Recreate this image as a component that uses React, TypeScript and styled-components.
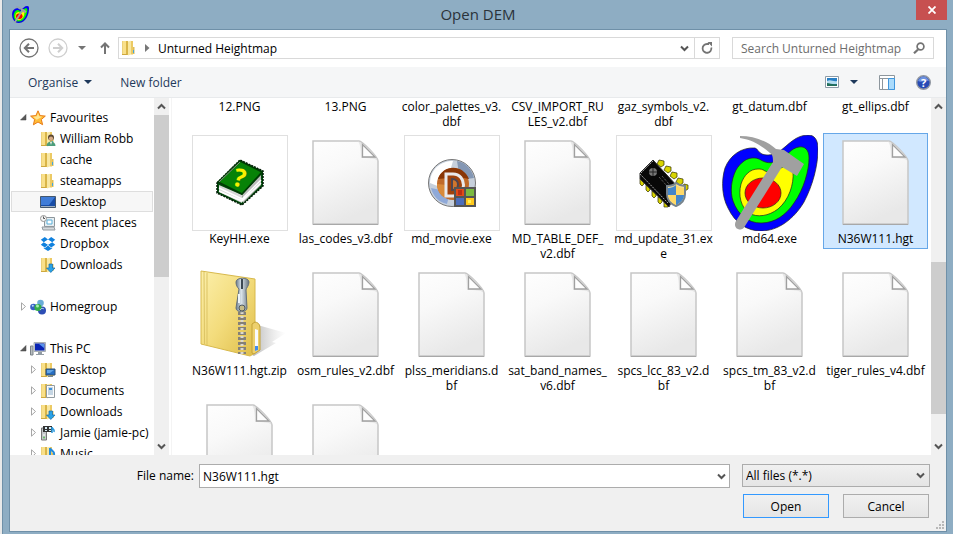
import React, { useId, useLayoutEffect, useRef } from "react";
import styled, { createGlobalStyle, css } from "styled-components";

const Global = createGlobalStyle`
  * { box-sizing: border-box; }
  body { margin: 0; background: #e9e9e9; }
  body, button, input, select {
    font-family: "Open Sans", "Noto Sans", sans-serif;
    font-size: 12px;
    line-height: 15px;
    color: #000;
  }
  button { padding: 0; border: 0; background: none; }
  svg { display: block; flex: none; }
`;

/* ---------- window frame ---------- */

const Frame = styled.div`
  display: flex;
  flex-direction: column;
  height: 100vh;
  margin-left: 2px;
  padding: 0 6px 2px;
  border-left: 1px solid #6f90a8;
  background: #8eadc3;
`;
const TitleBar = styled.header`
  display: grid;
  grid-template-columns: 1fr auto 1fr;
  flex: none;
  height: 29px;
`;
const AppIcon = styled.div`
  padding: 6px 0 0 3px;
`;
const Title = styled.h1`
  margin: 0;
  font-size: 15px;
  font-weight: 400;
  line-height: 29px;
  color: #2b333a;
`;
const CloseButton = styled.button`
  display: grid;
  place-items: center;
  justify-self: end;
  width: 31px;
  height: 20px;
  background: #c75050;
`;
const Dialog = styled.main`
  display: flex;
  flex: 1;
  flex-direction: column;
  min-height: 0;
  border: 1px solid #6f90a8;
  background: #fff;
`;

/* ---------- navigation ---------- */

const NavRow = styled.nav`
  display: flex;
  align-items: center;
  flex: none;
  height: 37px;
  padding: 0 12px 1px 9px;
`;
const IconButton = styled.button<{ $width?: number }>`
  display: grid;
  place-items: center;
  flex: none;
  width: ${(p) => p.$width ?? 20}px;
  height: 20px;
`;
const HistoryButtons = styled.div`
  display: flex;
  align-items: center;
  gap: 9px;
  width: 99px;
`;
const AddressBar = styled.div`
  display: flex;
  align-items: center;
  flex: 1;
  height: 22px;
  border: 1px solid #d9d9d9;
`;
const Crumbs = styled.div`
  display: flex;
  align-items: center;
  flex: 1;
  gap: 8px;
  padding-left: 2px;
`;
const RefreshCell = styled.div`
  display: grid;
  place-items: center;
  width: 25px;
  height: 20px;
  border-left: 1px solid #d9d9d9;
`;
const SearchBox = styled.label`
  display: flex;
  align-items: center;
  width: 202px;
  height: 22px;
  margin-left: 12px;
  padding: 0 8px;
  border: 1px solid #d9d9d9;
`;
const SearchInput = styled.input`
  flex: 1;
  min-width: 0;
  padding: 0;
  border: 0;
  outline: 0;
  background: none;
  &::placeholder { color: #6d6d6d; opacity: 1; }
`;
const Toolbar = styled.div`
  display: flex;
  align-items: center;
  flex: none;
  height: 31px;
  padding: 0 15px 0 18px;
  border-bottom: 1px solid #e8eaec;
  background: #f5f6f7;
`;
const ToolButton = styled.button`
  display: flex;
  align-items: center;
  gap: 6px;
  margin-right: 28px;
  color: #1e395b;
`;
const ViewTools = styled.div`
  display: flex;
  align-items: center;
  margin-left: auto;
`;
const ToolIcon = styled.button<{ $gap: number }>`
  margin-left: ${(p) => p.$gap}px;
`;

/* ---------- body ---------- */

const Body = styled.div`
  display: flex;
  flex: 1;
  min-height: 0;
`;
const Sidebar = styled.aside`
  flex: none;
  width: 144px;
  padding: 9px 1px 0;
  overflow: hidden;
`;
const TreeList = styled.ul`
  margin: 0;
  padding: 0;
  list-style: none;
`;
const Group = styled.li`
  margin-bottom: 21px;
`;
const TreeRow = styled.a<{ $child?: boolean; $active?: boolean }>`
  display: flex;
  align-items: center;
  height: 21px;
  padding-left: ${(p) => (p.$child ? 18 : 8)}px;
  gap: 3px;
  border: 1px solid transparent;
  color: #000;
  text-decoration: none;
  white-space: nowrap;
  ${(p) => p.$active && css`
    border-color: #dedede;
    background: #f7f7f7;
  `}
`;
const Label = styled.span`
  padding-left: 1px;
`;
const ScrollTrack = styled.div`
  display: flex;
  flex: none;
  flex-direction: column;
  width: 15px;
  background: #f0f0f0;
`;
const ScrollArrow = styled.button`
  display: grid;
  place-items: center;
  flex: none;
  height: 17px;
`;
const Spacer = styled.div<{ $grow: number }>`
  flex: ${(p) => p.$grow} 1 0;
`;
const Thumb = styled.div<{ $grow: number }>`
  flex: ${(p) => p.$grow} 1 0;
  background: #cdcdcd;
`;
const FilePane = styled.section`
  flex: 1;
  min-width: 0;
  margin-left: 2px;
  padding-left: 15px;
  overflow: hidden;
  border-left: 1px solid #f4f4f4;
`;
const FileGrid = styled.ul`
  display: grid;
  grid-template-columns: repeat(auto-fill, 105px);
  grid-auto-rows: 132px;
  column-gap: 1px;
  margin: 0;
  padding: 0;
  list-style: none;
`;
const FileItem = styled.li<{ $selected?: boolean }>`
  display: flex;
  flex-direction: column;
  align-items: center;
  align-self: start;
  padding: 1px 0;
  border: 1px solid ${(p) => (p.$selected ? "#66a7e8" : "transparent")};
  background: ${(p) => (p.$selected ? "#d1e8ff" : "none")};
`;
const Preview = styled.div<{ $framed?: boolean }>`
  display: flex;
  align-items: center;
  justify-content: center;
  width: 96px;
  height: 96px;
  box-shadow: ${(p) => (p.$framed ? "inset 0 0 0 1px #e0e0e0" : "none")};
`;
const FileName = styled.span`
  min-height: 16px;
  text-align: center;
  white-space: pre;
`;

/* ---------- footer ---------- */

const Footer = styled.form`
  display: grid;
  grid-template-columns: 177px 1fr 188px;
  grid-template-rows: 24px 24px;
  align-items: start;
  flex: none;
  column-gap: 12px;
  row-gap: 6px;
  height: 76px;
  padding: 9px 16px 0 0;
  background: #f0f0f0;
`;
const NameField = styled.div`
  display: grid;
  grid-column: 1 / 3;
  grid-template-columns: 184px 1fr;
  column-gap: 5px;
`;
const FileLabel = styled.label`
  line-height: 24px;
  text-align: right;
`;
const Combo = styled.div`
  display: flex;
  align-items: center;
  height: 24px;
  border: 1px solid #acacac;
  background: #fff;
`;
const ComboInput = styled.input`
  flex: 1;
  min-width: 0;
  padding: 0 3px;
  border: 0;
  outline: 0;
  background: none;
`;
const SelectBox = styled.div`
  display: grid;
  align-items: center;
  height: 23px;
  border: 1px solid #acacac;
  background: linear-gradient(#f0f0f0, #e5e5e5);
  > * { grid-area: 1 / 1; }
  > svg { justify-self: end; margin-right: 4px; pointer-events: none; }
`;
const Select = styled.select`
  width: 100%;
  height: 21px;
  padding: 0 3px;
  border: 0;
  appearance: none;
  background: none;
`;
const Actions = styled.div`
  display: flex;
  grid-column: 3;
  justify-content: space-between;
  padding: 0 1px;
`;
const PushButton = styled.button<{ $primary?: boolean }>`
  width: 86px;
  height: 24px;
  border: 1px solid ${(p) => (p.$primary ? "#3399ff" : "#acacac")};
  background: linear-gradient(#f0f0f0, #e5e5e5);
`;
const GripHolder = styled.div`
  position: absolute;
  right: 8px;
  bottom: 4px;
`;

/* ---------- small glyphs ---------- */

const Chevron = ({ up = false }: { up?: boolean }) => (
  <svg width="9" height="7" viewBox="0 0 9 7">
    <path d={up ? "M1 5.5 4.5 2 8 5.5" : "M1 1.5 4.5 5 8 1.5"} fill="none" stroke="#555" strokeWidth="2" />
  </svg>
);
const Caret = ({ color }: { color: string }) => (
  <svg width="8" height="4" viewBox="0 0 8 4"><path d="M0 0h8L4 4z" fill={color} /></svg>
);
const HistoryArrow = ({ forward = false }: { forward?: boolean }) => (
  <svg width="20" height="20" viewBox="0 0 20 20" fill="none" stroke={forward ? "#cfcfcf" : "#747474"}>
    <circle cx="10" cy="10" r="9" strokeWidth="1.3" />
    <path d={forward ? "M5 10h9M10 5.8l4.2 4.2-4.2 4.2" : "M15 10H6M10 5.8 5.8 10l4.2 4.2"} strokeWidth="2" />
  </svg>
);
const Expander = ({ open = false }: { open?: boolean }) => (
  <svg width="7" height="9" viewBox="0 0 7 9">
    {open ? <path d="M6 1.5V7H.5z" fill="#595959" stroke="#404040" strokeWidth=".5" />
      : <path d="M1.5.8v7.400l4-3.700z" fill="#fff" stroke="#a6a6a6" />}
  </svg>
);
const Contours = ({ size }: { size: number }) => (
  <svg width={size} height={size} viewBox="0 0 96 96">
    <g stroke="#222" strokeWidth=".7">
      <path d="M33 13C20 12 8 20 3 33-1 46 0 62 6 73c7 15 19 23 33 23 17 0 33-12 43-29C91 50 96 30 96 14 96 4 92 0 86 0 74 0 66 10 58 16c-6 4-13 5-18 3-4-2-4-5-7-6z" fill="#00f" />
      <path d="M33 23c-8-1-15 5-19 12-5 10-6 22-3 31 5 14 15 22 28 22 14 0 25-8 33-20 10-14 15-33 15-45 0-8-4-12-10-11-8 1-12 9-19 13-9 5-16 2-19 0-2-1-4-2-6-2z" fill="#0f0" />
      <path d="M36 34c-8 0-14 6-17 15-3 12 0 23 8 29 8 5 20 3 29-4 11-9 16-25 15-37-1-6-6-8-12-4-7 4-11 5-16 3-3-2-4-2-7-2z" fill="#ff0" />
      <ellipse cx="41" cy="58" rx="18" ry="15" fill="red" />
    </g>
    <path d="M18 1c14 0 27 5 36 13l8 1 20 14-7 12-15-9-37 59c-2 4-5 4-7 3-3-1-4-5-2-8l37-59c0-6-1-8-3-9C40 11 31 5 18 3z" fill="#a0a0a0" />
  </svg>
);

/* ---------- tree icons ---------- */

type Mark = "user" | "screen" | "doc" | "down" | "note";
const Folder = ({ mark }: { mark?: Mark }) => (
  <svg width="16" height="16" viewBox="0 0 16 16">
    <path d="M1 1h5v14H1z" fill="#f9e08a" />
    <path d="M1 1h1v14H1z" fill="#ecd17a" />
    <path d="M5 1h2v14H5z" fill="#d9b548" />
    <path d="M7 1.500 10 .8v13.700l-3 1z" fill="#f8e7a2" />
    <path d="M10 1h2v13.500h-2z" fill="#ecca64" />
    <path d="M12 7h1.500v7H12z" fill="#dfbd55" />
    <path d="M1 14.500h5" stroke="#cfa93f" />
    <path d="M12 10h1v3h-1z" fill="#42a5dc" />
    {mark === "user" && <g><circle cx="11" cy="6.500" r="3" fill="#5c4934" /><circle cx="11" cy="7.600" r="2.100" fill="#d7ab85" /><path d="M6.500 15c0-6 9-6 9 0z" fill="#4d9d7b" /><path d="M10 11h2l-1 3z" fill="#e8efe9" /></g>}
    {mark === "screen" && <g><path d="M6 7h9v6H6z" fill="#276fc3" stroke="#315172" /><path d="M7 8h7l-4 3H7z" fill="#63a5e4" /><path d="M8 14h5v1H8z" fill="#7a8790" /></g>}
    {mark === "doc" && <g><path d="M6.500 2.500h8v12h-8z" fill="#fcfcfc" stroke="#929ba0" /><path d="M8 5h5M8 7h5M8 9h5M8 11h5" stroke="#8eafca" /><path d="M9 5h3v2H9z" fill="#3e92dc" /></g>}
    {mark === "down" && <path d="M9 7h3.500v4H15l-4.200 4.500L6.500 11H9z" fill="#28a2e8" stroke="#176ca7" strokeWidth=".7" />}
    {mark === "note" && <path d="M10 2v10M10 2c1 3 5 3 4 7" fill="none" stroke="#228bdc" strokeWidth="2" />}
  </svg>
);
const Star = () => (
  <svg width="16" height="16" viewBox="0 0 16 16"><path d="m8 .8 2.100 4.800 5.200.5-4 3.400 1.300 5.200L8 12l-4.600 2.800 1.200-5.200-4-3.500 5.300-.5z" fill="#ffbd38" stroke="#e87b17" /><path d="m8 3 1.200 3.300 3 .4-5.500 3-3.500-3 3.600-.4z" fill="#ffe591" /></svg>
);
const Screen = () => (
  <svg width="16" height="16" viewBox="0 0 16 16"><path d="M.5 2.500h15v11H.5z" fill="#174ca7" stroke="#45586e" /><path d="M1 3h14L9 11H1z" fill="#3f7cd8" /><path d="M1 12h14v1H1z" fill="#9eafc0" /></svg>
);
const Recent = () => (
  <svg width="16" height="16" viewBox="0 0 16 16"><path d="M4.500 2.500h10v9h-10z" fill="#e7eef2" stroke="#8c969c" /><path d="M7 5h5v4H7z" fill="#fff" stroke="#58afd9" /><circle cx="3.500" cy="3.500" r="3" fill="#f5f5f5" stroke="#969696" /><path d="M3.500 1.500v2H5" fill="none" stroke="#555" /><path d="M2 12h12l1 3H3z" fill="#d5d9dc" stroke="#939ba1" /></svg>
);
const Dropbox = () => (
  <svg width="16" height="16" viewBox="0 0 16 16" fill="#1081de"><path d="M4.800 1 8 3.600 3.800 6.200.8 3.700zM11.200 1 8 3.600l4.200 2.600 3-2.500zM3.800 6.200 8 8.800l-3.200 2.600-4-2.600zM12.200 6.200 8 8.800l3.200 2.600 4-2.600zM8 9.600l3.200 2.600 1-.6v1L8 15l-4.200-2.400v-1l1 .6z" /><path d="m8 3.900 3.700 2.300L8 8.500 4.300 6.200z" fill="#fff" /></svg>
);
const Homegroup = () => (
  <svg width="16" height="16" viewBox="0 0 16 16"><circle cx="10.500" cy="4" r="3.300" fill="#69add8" /><circle cx="3.500" cy="8" r="3.300" fill="#365fc5" /><circle cx="12" cy="11.500" r="4" fill="#2d4eb5" /><circle cx="8" cy="8.500" r="3.600" fill="#33ad4a" /><circle cx="7.500" cy="7" r="1.500" fill="#a5edb0" /><circle cx="2.800" cy="6.800" r="1" fill="#b7d9fa" /><path d="M10 11c1-2 3-2 4-1" fill="none" stroke="#a5c8ef" /></svg>
);
const Computer = () => (
  <svg width="16" height="16" viewBox="0 0 16 16"><path d="M.5 5H3v9H.5z" fill="#b8bdc0" stroke="#7b8388" /><path d="M4 1.500h11.500v9H4z" fill="#c2cad1" stroke="#aab0b5" /><path d="M5 2.500h9.500v7H5z" fill="#0924b4" /><path d="M9 3h5v4z" fill="#5894ed" /><path d="M8 11h4v2h2v1H6v-1h2z" fill="#929ca4" /></svg>
);
const MediaServer = () => (
  <svg width="16" height="16" viewBox="0 0 16 16"><path d="M1.500 3h5v12h-5z" fill="#c4c7c9" stroke="#777" /><path d="M3 10h2" stroke="#fff" /><circle cx="4" cy="12.500" r="1" fill="#5ebf5e" /><path d="M3 1h9v6H3z" fill="#333" /><path d="M5 2h2v2H5zM9 2h2v2H9zM5 5h2v1H5zM9 5h2v1H9z" fill="#d9edf4" /><path d="M12 2v6M12 2c0 2 3 2 2 5" fill="none" stroke="#2797dc" strokeWidth="1.500" /></svg>
);

/* ---------- large file icons ---------- */

const Page = () => {
  const id = useId();
  return (
    <svg width="70" height="88" viewBox="0 0 70 88">
      <defs>
        <linearGradient id={id} x1="0" y1="0" x2=".35" y2="1"><stop stopColor="#fefefe" /><stop offset=".4" stopColor="#f9f9f9" /><stop offset="1" stopColor="#e8e8e8" /></linearGradient>
      </defs>
      <path d="M2 2h46c3 0 19 16 19 20v63H2z" fill={`url(#${id})`} stroke="#c6c6c6" strokeWidth="1.500" />
      <path d="M2 85.500h65" stroke="#a8a8a8" />
      <path d="M46 2c3 1 4 7 4 17 8 0 14 0 17 3C66 17 53 3 46 2z" fill="#dedede" opacity=".7" />
      <path d="M51.500 5.500V18H64z" fill="#fdfdfd" stroke="#a0a0a0" strokeWidth="1.300" />
    </svg>
  );
};
const Book = () => (
  <svg width="48" height="48" viewBox="0 0 48 48">
    <path d="M1 24 24 1l23 11v15L26 46 1 34z" fill="#004b0b" stroke="#001b05" strokeWidth="1.500" strokeDasharray="2 1" />
    <path d="m3 26 23 10v8L3 33z" fill="#d8d8d8" /><path d="m26 36 19-20v10L27 44z" fill="#bcbcbc" />
    <path d="m3 29 23 11 19-19M3 32l23 10 19-18" fill="none" stroke="#fff" strokeWidth="1.500" />
    <path d="M2 23 24 2l22 11-20 22z" fill="#078207" stroke="#003b05" strokeWidth="1.500" />
    <path d="M3 23 24 3" stroke="#8d8d8d" />
    <text x="18" y="28" fill="#f8f000" fontFamily="Open Sans, sans-serif" fontSize="25" fontWeight="700" transform="rotate(14 25 18)">?</text>
  </svg>
);
const Movie = () => (
  <svg width="48" height="48" viewBox="0 0 48 48">
    <circle cx="24" cy="24" r="23.500" fill="#c7d0dc" stroke="#777" />
    <path d="M2 24C2 10 13 2 25 2l-5 17-8 9z" fill="#fff" /><path d="M29 2c8 1 15 8 17 17l-14 2z" fill="#8497b4" /><path d="M3 29c2 8 7 14 16 16l3-12z" fill="#8fa9d8" />
    <circle cx="25" cy="25" r="16" fill="#c06a2a" /><path d="M10 20c5-15 25-15 31 0l-10-2z" fill="#8a3606" /><path d="M9 25c0 6 3 11 8 14l2-13z" fill="#d98a3a" />
    <path d="M18 15h7c14 0 14 22 0 22h-7z" fill="#9f420d" stroke="#e9e9ec" strokeWidth="3" /><path d="M24 20v11c8 0 8-11 0-11z" fill="#cf762d" stroke="#4f4650" strokeWidth="2" />
    <path d="M26 28h22v20H26z" fill="#555" /><path d="M28 30h8v7h-8z" fill="#e14a18" /><path d="M38 30h8v7h-8z" fill="#7bba40" /><path d="M28 39h8v7h-8z" fill="#4d6ebc" /><path d="M38 39h8v7h-8z" fill="#ffc91d" />
    <path d="M30 31h4v5h-4z" fill="#b92f13" /><path d="M40 41h3v3h-3z" fill="#fff058" />
  </svg>
);
const Chip = () => (
  <svg width="50" height="50" viewBox="0 0 50 50">
    <g fill="#d8d400" stroke="#302f00" strokeWidth=".7">
      <path d="m18 6 2-4 5 1v4l-3 2zM25 12l2-4 5 1v4l-3 2zM31 18l2-4 5 1v4l-3 2zM37 24l2-4 5 1v4l-3 2zM43 30l2-4 4 1v4l-3 2z" />
      <path d="M1 21h4v5l-2 2-2-2zM7 27h4v5l-2 2-2-2zM13 33h4v5l-2 2-2-2zM19 39h4v5l-2 2-2-2zM25 44h4v5h-4z" />
    </g>
    <path d="M1 15 14 2l25 27-9 20L1 21z" fill="#080808" stroke="#2d2d2d" /><path d="m1 16 28 29M2 15 14 3" stroke="#a5a5a5" strokeDasharray="2 1" />
    <circle cx="14" cy="14" r="4" fill="#777" /><path d="M10 14h8M14 10v8" stroke="#222" /><path d="m20 19 8 9M23 18l7 8" stroke="#777" strokeDasharray="1 1" />
    <path d="M37 25c4 3 7 3 9 3v8c0 6-4 10-9 12-5-2-9-6-9-12v-8c3 0 6 0 9-3z" fill="#f7e19a" stroke="#77838c" strokeWidth="2" />
    <path d="M37 27v10h-8v-7c3 0 6-1 8-3zM37 37h8c0 5-4 8-8 10z" fill="#4586c9" /><path d="M37 37v10c-4-2-7-5-8-10zM37 27c2 2 5 3 8 3v7h-8z" fill="#ffd968" />
  </svg>
);
const Zip = () => {
  const id = useId();
  return (
    <svg width="94" height="94" viewBox="0 0 94 94">
      <defs>
        <linearGradient id={id + "f"} x2="1" y2="1"><stop stopColor="#fcefaa" /><stop offset=".5" stopColor="#f3dc7c" /><stop offset="1" stopColor="#dfbd48" /></linearGradient>
        <linearGradient id={id + "s"}><stop stopColor="#888" stopOpacity=".65" /><stop offset="1" stopColor="#bbb" stopOpacity="0" /></linearGradient>
        <linearGradient id={id + "m"}><stop stopColor="#66788a" /><stop offset=".4" stopColor="#dce6ec" /><stop offset="1" stopColor="#65727c" /></linearGradient>
      </defs>
      <path d="m57 55 36 10-14 9 4 1-22 13-4-2z" fill={`url(#${id}s)`} />
      <path d="m8 3 54 8v74l-5 3L8 76z" fill={`url(#${id}f)`} stroke="#d8b94c" />
      <path d="m11 4 .5 72M14 5v72" stroke="#dcc365" /><path d="M62 54c5 1 5 4 5 8v20l-6 4-2-1V56z" fill="#edd06d" stroke="#c4a236" />
      <path d="m62 61 3 1v20l-3 1z" fill="#f8fbff" /><path d="M62 78h3v4l-3 1z" fill="#438ced" />
      <path d="M49 44v42" stroke="#858078" strokeWidth="8" strokeDasharray="3 2" /><path d="M49 44v42" stroke="#ddd9ce" strokeWidth="3" strokeDasharray="2 2" />
      <path d="M43 14c0-5 13-5 13 0 0 4-3 6-3 8l1 18c0 5-11 5-11 0l3-19c-2-2-3-4-3-7z" fill={`url(#${id}m)`} stroke="#65717b" />
      <circle cx="49" cy="40" r="3" fill="#c7bc86" stroke="#4d5963" /><path d="M49 11v10" stroke="#3b4853" strokeWidth="2" /><path d="M46 26v9" stroke="#eef5f9" strokeWidth="2" />
    </svg>
  );
};

/* ---------- data ---------- */

type TreeEntry = { name: string; icon: React.ReactNode; active?: boolean };
const favourites: TreeEntry[] = [
  { name: "William Robb", icon: <Folder mark="user" /> },
  { name: "cache", icon: <Folder /> },
  { name: "steamapps", icon: <Folder /> },
  { name: "Desktop", icon: <Screen />, active: true },
  { name: "Recent places", icon: <Recent /> },
  { name: "Dropbox", icon: <Dropbox /> },
  { name: "Downloads", icon: <Folder mark="down" /> },
];
const computer: TreeEntry[] = [
  { name: "Desktop", icon: <Folder mark="screen" /> },
  { name: "Documents", icon: <Folder mark="doc" /> },
  { name: "Downloads", icon: <Folder mark="down" /> },
  { name: "Jamie (jamie-pc)", icon: <MediaServer /> },
  { name: "Music", icon: <Folder mark="note" /> },
];

type FileEntry = { name: string; kind?: "book" | "movie" | "chip" | "map" | "zip"; selected?: boolean };
const files: FileEntry[] = [
  { name: "12.PNG" }, { name: "13.PNG" }, { name: "color_palettes_v3.\ndbf" }, { name: "CSV_IMPORT_RU\nLES_v2.dbf" },
  { name: "gaz_symbols_v2.\ndbf" }, { name: "gt_datum.dbf" }, { name: "gt_ellips.dbf" },
  { name: "KeyHH.exe", kind: "book" }, { name: "las_codes_v3.dbf" }, { name: "md_movie.exe", kind: "movie" },
  { name: "MD_TABLE_DEF_\nv2.dbf" }, { name: "md_update_31.ex\ne", kind: "chip" }, { name: "md64.exe", kind: "map" },
  { name: "N36W111.hgt", selected: true },
  { name: "N36W111.hgt.zip", kind: "zip" }, { name: "osm_rules_v2.dbf" }, { name: "plss_meridians.d\nbf" },
  { name: "sat_band_names_\nv6.dbf" }, { name: "spcs_lcc_83_v2.d\nbf" }, { name: "spcs_tm_83_v2.d\nbf" }, { name: "tiger_rules_v4.dbf" },
  { name: "" }, { name: "" },
];
const art = { book: <Book />, movie: <Movie />, chip: <Chip />, map: <Contours size={96} />, zip: <Zip /> };
const SCROLLED = 97;

const Scrollbar = ({ before, thumb, after }: { before: number; thumb: number; after: number }) => (
  <ScrollTrack>
    <ScrollArrow aria-label="Scroll up"><Chevron up /></ScrollArrow>
    <Spacer $grow={before} /><Thumb $grow={thumb} /><Spacer $grow={after} />
    <ScrollArrow aria-label="Scroll down"><Chevron /></ScrollArrow>
  </ScrollTrack>
);

const Branch = ({ name, icon, open, items = [], expandable }: {
  name: string; icon: React.ReactNode; open?: boolean; items?: TreeEntry[]; expandable?: boolean;
}) => (
  <Group>
    <TreeRow href="#"><Expander open={open} />{icon}<Label>{name}</Label></TreeRow>
    {items.length > 0 && (
      <TreeList>
        {items.map((it) => (
          <li key={it.name}>
            <TreeRow href="#" $child $active={it.active}>
              {expandable ? <Expander /> : <svg width="7" height="9" />}
              {it.icon}<Label>{it.name}</Label>
            </TreeRow>
          </li>
        ))}
      </TreeList>
    )}
  </Group>
);

export default function App() {
  const pane = useRef<HTMLElement>(null);
  useLayoutEffect(() => {
    if (pane.current) pane.current.scrollTop = SCROLLED;
  }, []);

  return (
    <>
      <Global />
      <Frame>
        <TitleBar>
          <AppIcon><Contours size={17} /></AppIcon>
          <Title>Open DEM</Title>
          <CloseButton aria-label="Close">
            <svg width="8" height="8" viewBox="0 0 8 8"><path d="m.5.5 7 7m0-7-7 7" stroke="#fff" strokeWidth="1.800" /></svg>
          </CloseButton>
        </TitleBar>
        <Dialog>
          <NavRow>
            <HistoryButtons>
              <IconButton aria-label="Back"><HistoryArrow /></IconButton>
              <IconButton aria-label="Forward"><HistoryArrow forward /></IconButton>
              <IconButton aria-label="Recent locations" $width={10}><Caret color="#747474" /></IconButton>
              <IconButton aria-label="Up" $width={18}>
                <svg width="10" height="12" viewBox="0 0 10 12"><path d="M5 12V1.500M1 5.500l4-4 4 4" fill="none" stroke="#747474" strokeWidth="2" /></svg>
              </IconButton>
            </HistoryButtons>
            <AddressBar>
              <Crumbs>
                <Folder />
                <svg width="5" height="8" viewBox="0 0 5 8"><path d="m0 0 4.500 4L0 8z" fill="#777" /></svg>
                <span>Unturned Heightmap</span>
              </Crumbs>
              <IconButton aria-label="Previous locations"><Chevron /></IconButton>
              <RefreshCell>
                <IconButton aria-label="Refresh">
                  <svg width="12" height="12" viewBox="0 0 12 12"><path d="M10.300 5.500A4.400 4.400 0 1 1 6 2h2" fill="none" stroke="#747474" strokeWidth="1.800" /><path d="M6.500 0 11 0v4.500z" fill="#747474" /></svg>
                </IconButton>
              </RefreshCell>
            </AddressBar>
            <SearchBox>
              <SearchInput aria-label="Search Unturned Heightmap" placeholder="Search Unturned Heightmap" />
              <svg width="12" height="12" viewBox="0 0 12 12" fill="none" stroke="#747474"><circle cx="7.500" cy="4.500" r="3.400" strokeWidth="1.700" /><path d="M5 7.500 1 11.300" strokeWidth="2.200" /></svg>
            </SearchBox>
          </NavRow>
          <Toolbar>
            <ToolButton>Organise <Caret color="#1e395b" /></ToolButton>
            <ToolButton>New folder</ToolButton>
            <ViewTools>
              <ToolIcon $gap={0} aria-label="Change your view">
                <svg width="14" height="12" viewBox="0 0 14 12"><path d="M.5.5h13v11H.5z" fill="#fff" stroke="#8d9ba7" /><path d="M2 2h10v8H2z" fill="#287fc4" /><path d="M2 5c4-2 6 1 10 0v3H2z" fill="#b5ddf1" /><path d="M2 7c3 0 6 2 10 1v2H2z" fill="#236f5b" /></svg>
              </ToolIcon>
              <ToolIcon $gap={11} aria-label="More view options"><Caret color="#1e395b" /></ToolIcon>
              <ToolIcon $gap={21} aria-label="Show the preview pane">
                <svg width="16" height="15" viewBox="0 0 16 15"><path d="M.5.5h15v14H.5zM.5 3.500h15M3.500 3.500v11" fill="#fff" stroke="#8d969d" /><path d="M9.500 3.500h6v11h-6z" fill="#aadbfc" stroke="#4096dd" /></svg>
              </ToolIcon>
              <ToolIcon $gap={21} aria-label="Help">
                <svg width="15" height="15" viewBox="0 0 15 15"><circle cx="7.500" cy="7.500" r="6.800" fill="#274bb5" stroke="#9298a2" strokeWidth="1.400" /><path d="M2 6c2-6 9-6 11 0-4-1-7 2-11 0z" fill="#6c91df" /><text x="7.500" y="11.500" textAnchor="middle" fill="#fff" fontFamily="Open Sans, sans-serif" fontSize="11" fontWeight="700">?</text></svg>
              </ToolIcon>
            </ViewTools>
          </Toolbar>
          <Body>
            <Sidebar>
              <TreeList>
                <Branch name="Favourites" icon={<Star />} open items={favourites} />
                <Branch name="Homegroup" icon={<Homegroup />} />
                <Branch name="This PC" icon={<Computer />} open expandable items={computer} />
              </TreeList>
            </Sidebar>
            <Scrollbar before={0} thumb={162} after={161} />
            <FilePane ref={pane}>
              <FileGrid>
                {files.map((f, i) => (
                  <FileItem key={i} $selected={f.selected}>
                    <Preview $framed={f.kind === "book" || f.kind === "movie" || f.kind === "chip"}>
                      {f.kind ? art[f.kind] : <Page />}
                    </Preview>
                    <FileName>{f.name}</FileName>
                  </FileItem>
                ))}
              </FileGrid>
            </FilePane>
            <Scrollbar before={147} thumb={152} after={24} />
          </Body>
          <Footer onSubmit={(e) => e.preventDefault()}>
            <NameField>
              <FileLabel htmlFor="file-name">File name:</FileLabel>
              <Combo>
                <ComboInput id="file-name" defaultValue="N36W111.hgt" />
                <IconButton type="button" aria-label="Recent file names" $width={16}><Chevron /></IconButton>
              </Combo>
            </NameField>
            <SelectBox>
              <Select aria-label="File type"><option>All files (*.*)</option></Select>
              <Chevron />
            </SelectBox>
            <Actions>
              <PushButton $primary>Open</PushButton>
              <PushButton type="button">Cancel</PushButton>
            </Actions>
          </Footer>
        </Dialog>
      </Frame>
      <GripHolder>
        <svg width="9" height="9" viewBox="0 0 9 9" fill="#b8b8b8"><path d="M6 0h2v2H6zM3 3h2v2H3zM6 3h2v2H6zM0 6h2v2H0zM3 6h2v2H3zM6 6h2v2H6z" /></svg>
      </GripHolder>
    </>
  );
}
